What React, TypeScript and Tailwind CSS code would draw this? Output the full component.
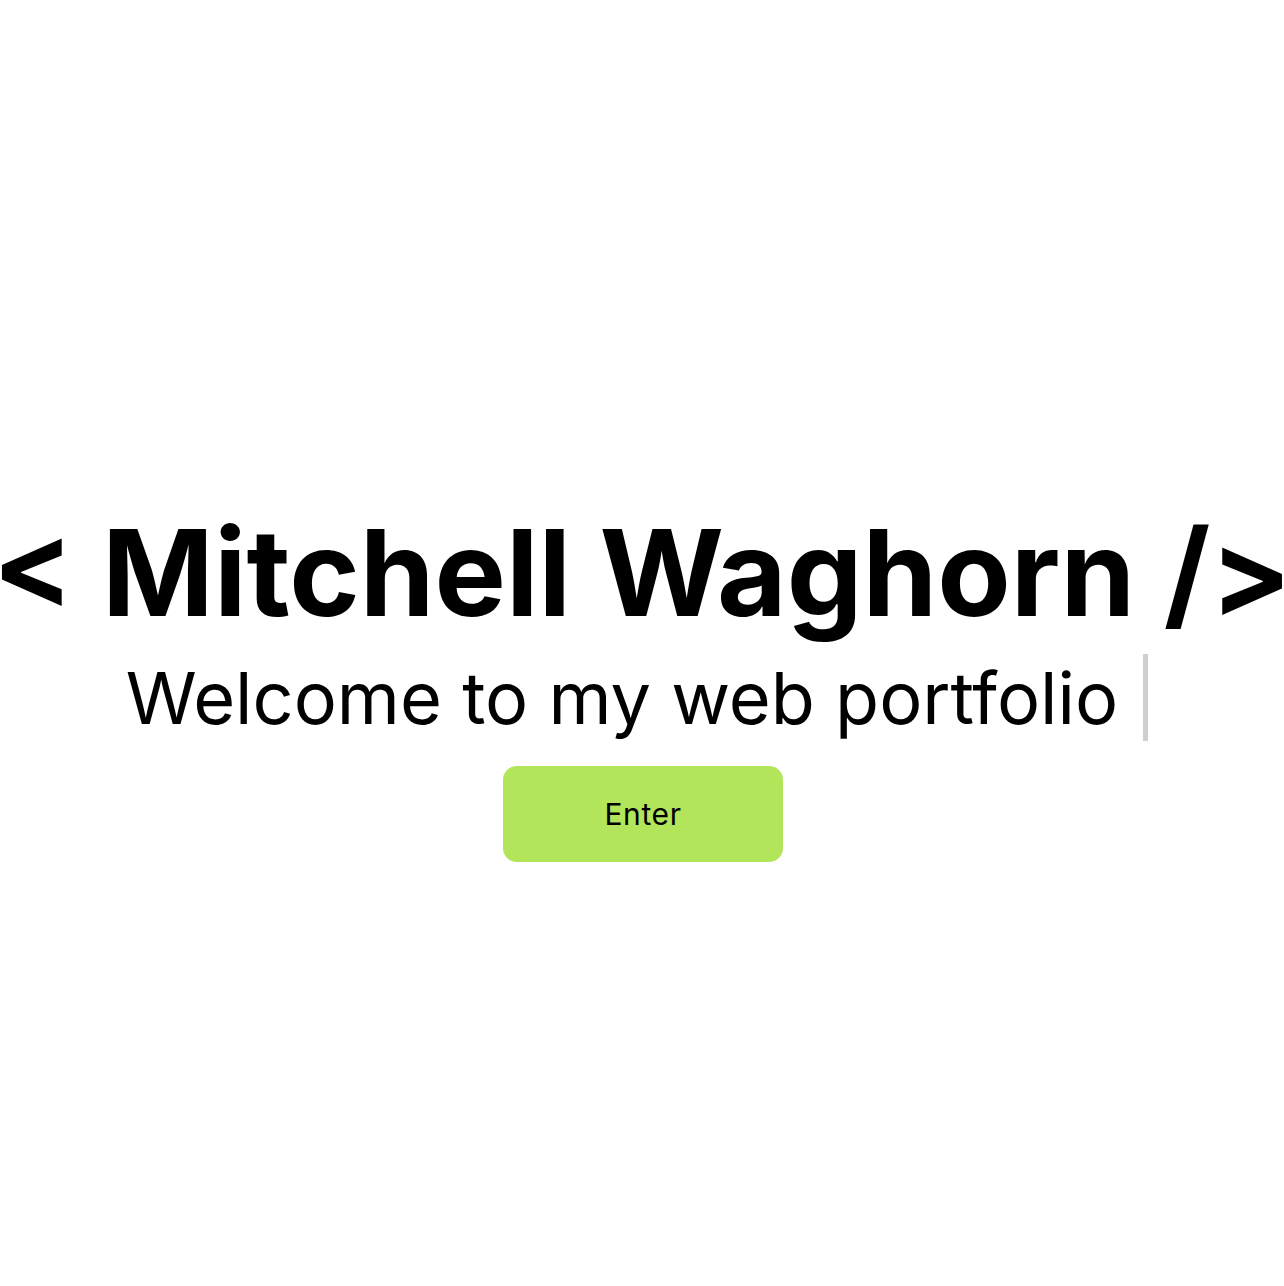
export default function App() {
  return (
    <div className="min-h-screen w-full bg-white overflow-hidden flex flex-col items-center pt-[513px]" style={{ fontFamily: "Inter, 'Noto Sans', sans-serif" }}>
      <h1 className="text-[120px] font-bold leading-none text-black whitespace-nowrap">&lt; Mitchell Waghorn /&gt;</h1>
      <div className="mt-[21px] mr-[10px] flex items-center text-[72px] leading-none text-black">
        <span>Welcome to my web portfolio</span>
        <span className="ml-[25px] inline-block w-[5px] h-[87px] bg-[#cfcfcf]"></span>
      </div>
      <button className="mt-[25px] ml-[2px] w-[280px] h-[96px] rounded-[14px] bg-[#b3e55a] text-[30px] tracking-[0.6px] text-black">Enter</button>
    </div>
  );
}
